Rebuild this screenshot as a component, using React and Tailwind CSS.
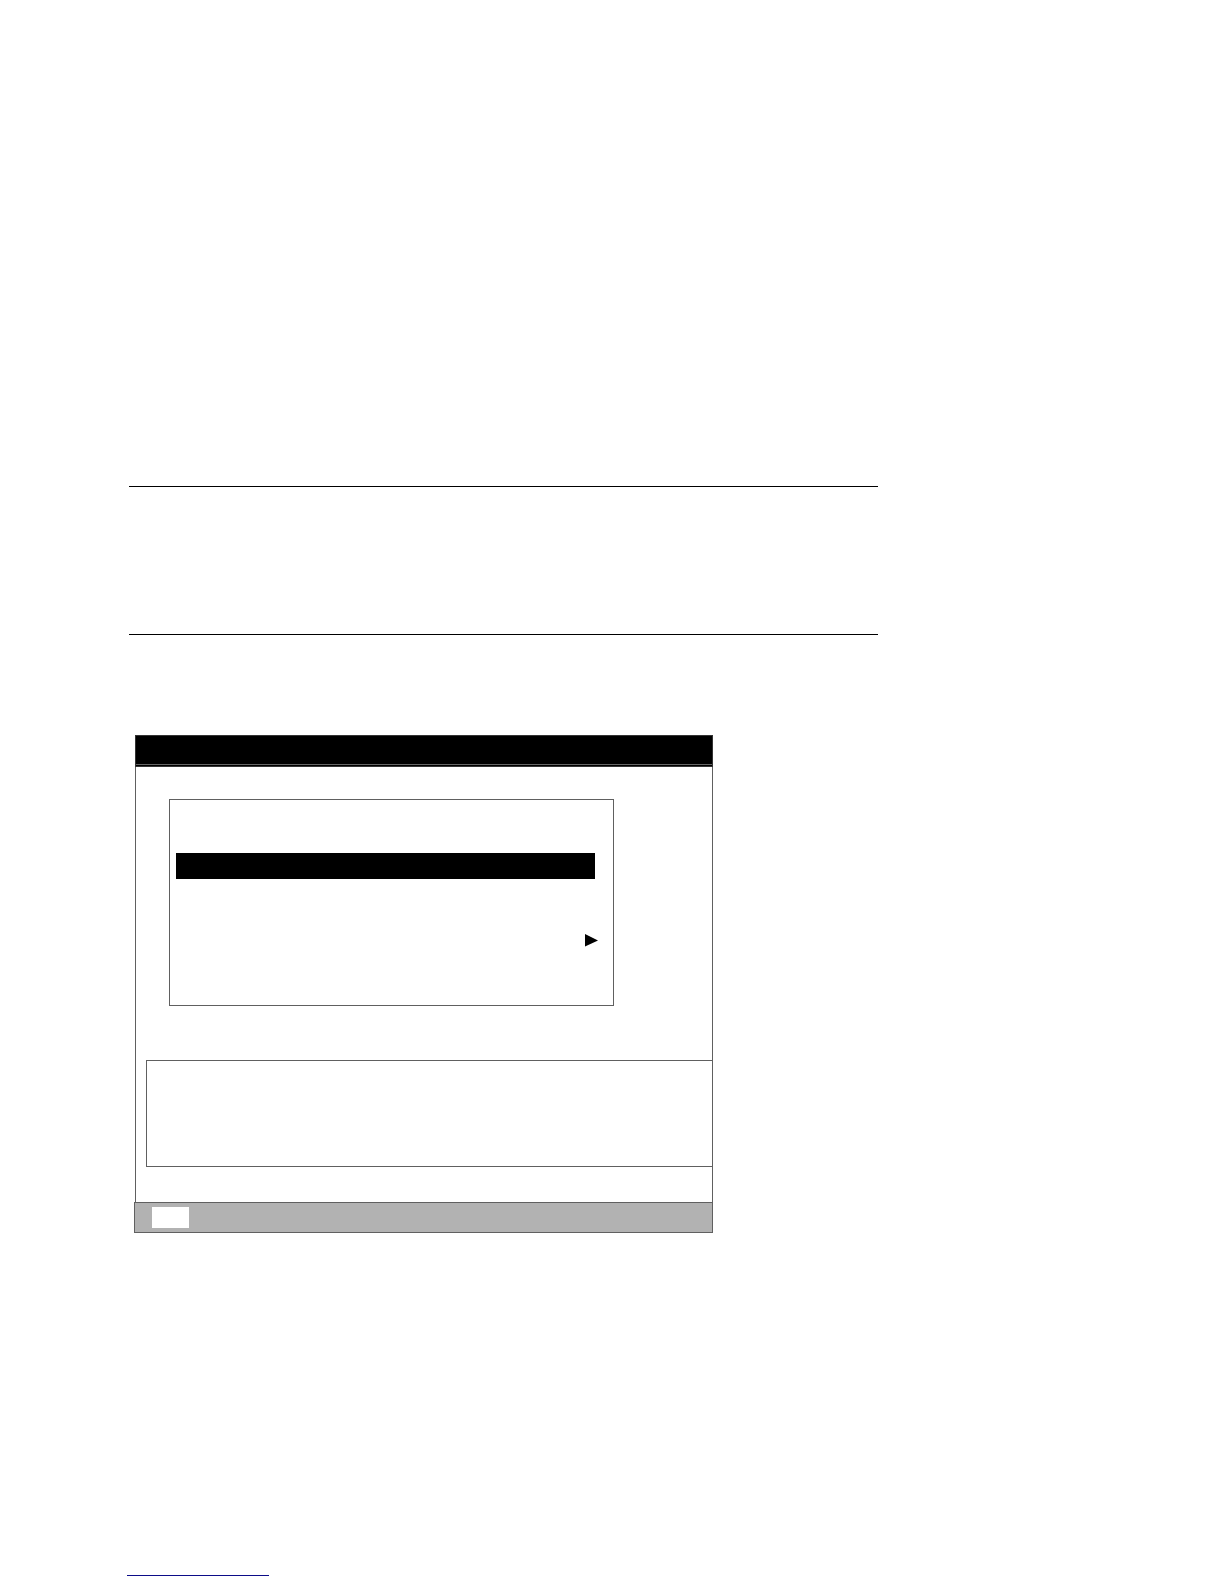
/* ─────────────────────────────────────────────────────────────
   App.jsx
   Blank manual page with a setup screen figure
───────────────────────────────────────────────────────────── */

function TitleBar() {
  return (
    <header className="border border-b-0 border-[#333333] bg-black">
      <div className="h-7" />
      <div className="h-[3px] border-y border-t-[#666666] border-b-[#333333]" />
    </header>
  );
}

function SetupMenu() {
  return (
    <nav className="mr-[98px] ml-[33px] border border-[#606060] pt-[53px] pb-[58px]">
      {/* selected row */}
      <div className="pr-[18px] pl-1.5">
        <button type="button" aria-label="Selected item" className="block h-[26px] w-full bg-black" />
      </div>

      {/* row that opens a submenu */}
      <div className="mt-[55px] pr-[15px] pl-1.5">
        <button type="button" aria-label="Open submenu" className="flex w-full justify-end">
          <svg width="13" height="13" viewBox="0 0 13 13" aria-hidden="true">
            <path d="M0 0L13 6.5L0 12.5Z" fill="#000000" />
          </svg>
        </button>
      </div>
    </nav>
  );
}

function SetupScreen() {
  return (
    <section className="mt-[100px] ml-[5px] max-w-[579px]">
      <div className="ml-px">
        <TitleBar />
        <div className="border-x border-[#606060] pt-8 pb-[35px]">
          <SetupMenu />
          {/* help panel */}
          <div className="mt-[54px] ml-2.5 h-[107px] border border-r-0 border-[#606060]" />
        </div>
      </div>

      <footer className="border border-[#606060] bg-[#b2b2b2] py-1 pl-[17px]">
        <div className="h-[21px] w-[37px] bg-white" />
      </footer>
    </section>
  );
}

export default function App() {
  return (
    <main className="min-h-screen bg-white pt-[486px] pb-2 pl-[129px] font-['Liberation_Sans',sans-serif]">
      <div className="max-w-[749px]">
        <hr className="border-t border-black" />
        <hr className="mt-[147px] border-t border-black" />
        <SetupScreen />
      </div>

      <a
        href="#top"
        aria-label="Back to top"
        className="mt-[322px] -ml-0.5 block h-[21px] w-[142px] border-b border-[#0c0c88]"
      />
    </main>
  );
}
